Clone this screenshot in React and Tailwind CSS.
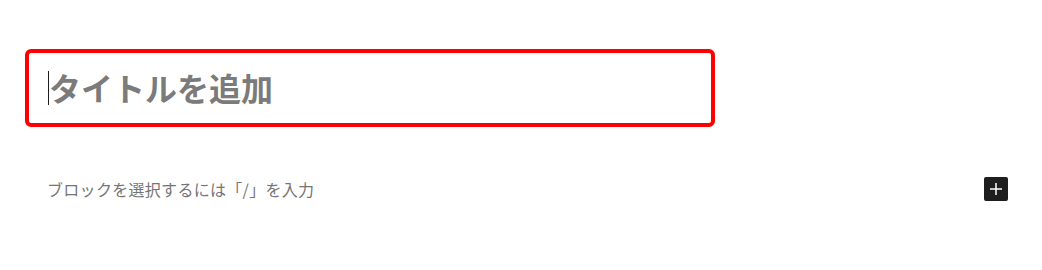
const App = () => {
  return (
    <div
      className="w-[1042px] h-[270px] bg-white overflow-hidden"
      style={{ fontFamily: '"Noto Sans CJK JP", "Noto Sans", sans-serif' }}
    >
      <div className="pt-[49px] pl-[25px]">
        <div className="w-[690px] h-[78px] border-[4px] border-[#ff0000] rounded-[6px] flex items-center pl-[19px]">
          <span className="w-px h-[34px] bg-[#1e1e1e]" />
          <span className="text-[32px] font-bold text-[#7b7b7b] leading-none -mt-[3px]">
            タイトルを追加
          </span>
        </div>
      </div>

      <div className="mt-[50px] flex items-center justify-between pl-[47px] pr-[34px]">
        <span className="text-[16px] text-[#757575] leading-none tracking-[0.3px]">
          ブロックを選択するには「/」を入力
        </span>
        <button className="w-6 h-6 bg-[#1e1e1e] rounded-[2px] flex items-center justify-center">
          <svg width="14" height="14" viewBox="0 0 14 14">
            <path d="M7 1v12M1 7h12" stroke="#fff" strokeWidth="1.5" />
          </svg>
        </button>
      </div>
    </div>
  );
};

export default App;
